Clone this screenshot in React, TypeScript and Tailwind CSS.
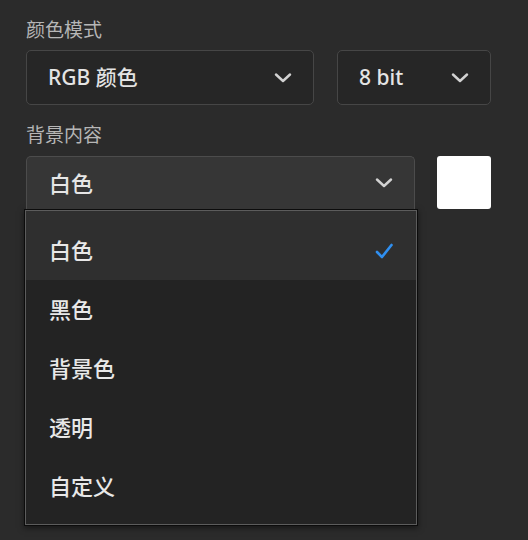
const ITEMS = ['白色', '黑色', '背景色', '透明', '自定义'];

function Chevron() {
  return (
    <svg width="18" height="10" viewBox="0 0 18 10" fill="none" className="shrink-0">
      <path d="M2 1.5 L9 8 L16 1.5" stroke="#d2d2d2" strokeWidth="2.4" strokeLinecap="round" strokeLinejoin="round" />
    </svg>
  );
}

function Check() {
  return (
    <svg width="18" height="18" viewBox="0 0 18 18" fill="none" className="shrink-0">
      <path d="M2 10 L7 15 L16.5 3" stroke="#2f8ff0" strokeWidth="2.6" strokeLinecap="round" strokeLinejoin="round" />
    </svg>
  );
}

export default function App() {
  return (
    <div className="h-[540px] w-full overflow-hidden bg-[#2b2b2b] px-[26px] pt-[16px] font-['Noto_Sans','Noto_Sans_CJK_SC',sans-serif]">
      {/* 颜色模式 */}
      <div className="text-[19px] leading-[28px] text-[#b6b6b6]">颜色模式</div>
      <div className="mt-[6px] flex gap-[23px]">
        <div className="flex h-[55px] w-[288px] items-center justify-between rounded-[5px] border border-[#464646] bg-[#262626] pl-[21px] pr-[21px]">
          <span className="text-[21px] font-medium text-[#e4e4e4]">RGB 颜色</span>
          <Chevron />
        </div>
        <div className="flex h-[55px] w-[154px] items-center justify-between rounded-[5px] border border-[#464646] bg-[#262626] pl-[21px] pr-[21px]">
          <span className="text-[21px] font-medium text-[#e4e4e4]">8 bit</span>
          <Chevron />
        </div>
      </div>

      {/* 背景内容 */}
      <div className="mt-[16px] text-[19px] leading-[28px] text-[#b6b6b6]">背景内容</div>
      <div className="mt-[7px] flex gap-[22px]">
        <div className="flex h-[53px] w-[389px] items-center justify-between rounded-t-[5px] border border-b-0 border-[#4c4c4c] bg-[#363636] pl-[22px] pr-[21px]">
          <span className="text-[22px] font-medium text-[#e6e6e6]">白色</span>
          <Chevron />
        </div>
        <div className="h-[53px] w-[54px] rounded-[3px] bg-white" />
      </div>

      {/* dropdown menu */}
      <div className="-ml-[2px] w-[394px] border border-[#0c0c0c] shadow-[0_2px_6px_rgba(0,0,0,0.5)]">
        <div className="border border-[#5c5c5c] bg-[#232323] pb-[8px]">
          {ITEMS.map((item, i) => (
            <div
              key={item}
              className={
                i === 0
                  ? 'flex h-[69px] items-center justify-between bg-[#2f2f2f] pl-[23px] pr-[23px] pt-[10px]'
                  : 'flex h-[59px] items-center justify-between pl-[23px] pr-[23px]'
              }
            >
              <span className="text-[22px] font-medium text-[#e8e8e8]">{item}</span>
              {i === 0 && <Check />}
            </div>
          ))}
        </div>
      </div>
    </div>
  );
}
